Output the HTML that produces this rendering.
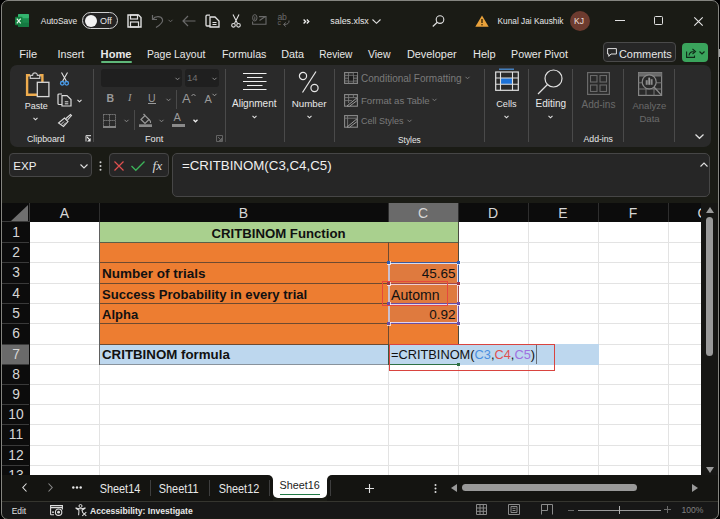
<!DOCTYPE html>
<html><head><meta charset="utf-8">
<style>
*{margin:0;padding:0;box-sizing:border-box}
html,body{width:720px;height:519px;overflow:hidden;background:#000}
body{position:relative;font-family:"Liberation Sans",sans-serif;color:#e8e8e8}
.a{position:absolute;white-space:nowrap}
#win{position:absolute;left:1px;top:0;width:718px;height:520px;background:#1a1b15;border:1px solid #858580;border-radius:7px;overflow:hidden}
.t{position:absolute;white-space:nowrap;line-height:1}
.sep{position:absolute;width:1px;background:#4a4a4a}
svg{position:absolute;overflow:visible}
</style></head><body>
<div id="win"></div>

<!-- ===== TITLE BAR ===== -->
<!-- excel icon -->
<svg style="left:15px;top:14px" width="14" height="13" viewBox="0 0 14 13">
  <rect x="3" y="0" width="11" height="13" rx="1" fill="#1a8a4c"/>
  <rect x="3" y="0" width="11" height="4.3" rx="1" fill="#33b36e"/>
  <rect x="3" y="8.7" width="11" height="4.3" rx="1" fill="#157a42"/>
  <rect x="0" y="2.8" width="7.5" height="8.4" rx="1" fill="#13803f"/>
  <path d="M1.8 4.6 L5.7 9.4 M5.7 4.6 L1.8 9.4" stroke="#e8f5ec" stroke-width="1.2"/>
</svg>
<div class="t" style="left:40.8px;top:16.8px;font-size:8.4px;color:#e8e8e8">AutoSave</div>
<div class="a" style="left:82px;top:12px;width:36px;height:17px;border:1.3px solid #cfcfcf;border-radius:9px;background:#232323"></div>
<div class="a" style="left:84.5px;top:14.5px;width:12px;height:12px;border-radius:50%;background:#f2f2f2"></div>
<div class="t" style="left:100px;top:16.5px;font-size:9px;color:#e8e8e8">Off</div>
<!-- save -->
<svg style="left:127px;top:14px" width="15" height="14" viewBox="0 0 15 14">
  <path d="M1 1 H11.5 L14 3.5 V13 H1 Z" fill="none" stroke="#e0e0e0" stroke-width="1.4"/>
  <rect x="3.5" y="1" width="7" height="4" fill="none" stroke="#e0e0e0" stroke-width="1.2"/>
  <rect x="3.5" y="8" width="8" height="5" fill="none" stroke="#e0e0e0" stroke-width="1.2"/>
</svg>
<!-- undo (disabled) -->
<svg style="left:151px;top:14px" width="13" height="14" viewBox="0 0 13 14">
  <path d="M1.5 1 V5.5 H6" fill="none" stroke="#6a6a6a" stroke-width="1.2"/>
  <path d="M1.8 5.3 C4 2 10 1.5 11.5 5.5 C12.5 8.5 9 11 5 13.5" fill="none" stroke="#6a6a6a" stroke-width="1.2"/>
</svg>
<svg style="left:168px;top:19px" width="5" height="4" viewBox="0 0 5 4"><path d="M0.5 0.8 L2.5 2.8 L4.5 0.8" fill="none" stroke="#6a6a6a" stroke-width="1"/></svg>
<!-- back arrow disabled -->
<svg style="left:182px;top:15px" width="14" height="12" viewBox="0 0 14 12">
  <path d="M13.5 6 H1 M6 1 L1 6 L6 11" fill="none" stroke="#6a6a6a" stroke-width="1.2"/>
</svg>
<!-- copy -->
<svg style="left:205px;top:14px" width="15" height="14" viewBox="0 0 15 14">
  <path d="M5 1.2 H2 Q1 1.2 1 2.2 V11 Q1 12 2 12 H5" fill="none" stroke="#e0e0e0" stroke-width="1.3"/>
  <path d="M5 3 H10 L14 7 V13 H5 Z" fill="none" stroke="#e0e0e0" stroke-width="1.3"/>
  <path d="M7.5 8.5 H11.5 M7.5 10.5 H11.5" stroke="#e0e0e0" stroke-width="1"/>
</svg>
<!-- scissors -->
<svg style="left:231px;top:14px" width="10" height="14" viewBox="0 0 10 14">
  <path d="M2 0.5 L6.5 9.5 M8 0.5 L3.5 9.5" stroke="#e0e0e0" stroke-width="1.1" fill="none"/>
  <circle cx="2.5" cy="11.3" r="1.8" fill="none" stroke="#e0e0e0" stroke-width="1.1"/>
  <circle cx="7.5" cy="11.3" r="1.8" fill="none" stroke="#e0e0e0" stroke-width="1.1"/>
</svg>
<!-- mail attach disabled -->
<svg style="left:252px;top:14px" width="15" height="11" viewBox="0 0 15 11">
  <path d="M7 2.6 H14 V10.2 H0.6 V7.5" fill="none" stroke="#6a6a6a" stroke-width="1.1"/>
  <path d="M7.5 6.5 L13 2.8" stroke="#6a6a6a" stroke-width="1.1"/>
  <ellipse cx="2.8" cy="3.8" rx="2.2" ry="3.2" fill="none" stroke="#6a6a6a" stroke-width="1"/>
  <path d="M2.8 2.5 V6" stroke="#6a6a6a" stroke-width="0.9"/>
</svg>
<!-- spelling disabled -->
<div class="t" style="left:277.5px;top:13.3px;font-size:8.6px;color:#6a6a6a;letter-spacing:-0.2px">ab</div>
<div class="t" style="left:277.5px;top:19.2px;font-size:7px;color:#6a6a6a">c</div>
<svg style="left:282px;top:20px" width="8" height="7" viewBox="0 0 8 7">
  <path d="M7 0.5 Q7.5 4.5 2 4.5 M3.8 2.5 L1.5 4.5 L3.8 6.5" fill="none" stroke="#6a6a6a" stroke-width="1"/>
</svg>
<svg style="left:302.5px;top:18.7px" width="7" height="5" viewBox="0 0 7 5"><path d="M0.6 0.5 L2.6 2.5 L0.6 4.5 M3.8 0.5 L5.8 2.5 L3.8 4.5" fill="none" stroke="#f0f0f0" stroke-width="1.3"/></svg>
<div class="t" style="left:330.3px;top:17px;font-size:8.9px;color:#e8e8e8">sales.xlsx</div>
<svg style="left:372px;top:19px" width="9" height="5" viewBox="0 0 9 5"><path d="M0.5 0.5 L4.5 4.3 L8.5 0.5" fill="none" stroke="#e0e0e0" stroke-width="1.1"/></svg>
<!-- search -->
<svg style="left:432px;top:15px" width="13" height="12" viewBox="0 0 13 12">
  <circle cx="8" cy="4.6" r="3.8" fill="none" stroke="#e0e0e0" stroke-width="1.1"/>
  <path d="M5.3 7.3 L0.8 11.5" stroke="#e0e0e0" stroke-width="1.2"/>
</svg>
<!-- warning -->
<svg style="left:475px;top:15px" width="14" height="12" viewBox="0 0 14 12">
  <path d="M7 0.5 L13.7 11.7 H0.3 Z" fill="#e9a23b"/>
  <path d="M7 4 V8" stroke="#2a1c00" stroke-width="1.3"/>
  <circle cx="7" cy="9.8" r="0.75" fill="#2a1c00"/>
</svg>
<div class="t" style="left:497.5px;top:16.8px;font-size:8.3px;color:#e8e8e8">Kunal Jai Kaushik</div>
<div class="a" style="left:570px;top:11px;width:20px;height:20px;border-radius:50%;background:#6d3b2f"></div>
<div class="t" style="left:574px;top:17px;font-size:8.5px;color:#f0e0dc">KJ</div>
<div class="a" style="left:615px;top:20px;width:10px;height:1.2px;background:#e0e0e0"></div>
<div class="a" style="left:654px;top:16px;width:9px;height:9px;border:1.2px solid #e0e0e0;border-radius:1.5px"></div>
<svg style="left:694px;top:16.5px" width="9" height="9" viewBox="0 0 9 9"><path d="M0.3 0.3 L8.7 8.7 M8.7 0.3 L0.3 8.7" stroke="#e8e8e8" stroke-width="1.1"/></svg>

<!-- ===== TABS ===== -->
<div class="t" style="left:19.3px;top:48.6px;font-size:11.1px">File</div>
<div class="t" style="left:57.6px;top:48.9px;font-size:10.69px">Insert</div>
<div class="t" style="left:100.6px;top:48.6px;font-size:11.14px;font-weight:bold">Home</div>
<div class="a" style="left:101px;top:61px;width:31px;height:2px;background:#5fb87a;border-radius:1px"></div>
<div class="t" style="left:146.9px;top:49.7px;font-size:10.42px">Page Layout</div>
<div class="t" style="left:221.9px;top:48.9px;font-size:10.7px">Formulas</div>
<div class="t" style="left:281.3px;top:48.9px;font-size:10.8px">Data</div>
<div class="t" style="left:319.3px;top:49.5px;font-size:10.07px">Review</div>
<div class="t" style="left:368.0px;top:49.7px;font-size:10.48px">View</div>
<div class="t" style="left:406.9px;top:48.8px;font-size:10.91px">Developer</div>
<div class="t" style="left:473.0px;top:48.7px;font-size:11.03px">Help</div>
<div class="t" style="left:511.1px;top:49.0px;font-size:10.67px">Power Pivot</div>
<div class="a" style="left:603px;top:42px;width:73px;height:20px;border:1px solid #4a4a4a;border-radius:4px;background:#262626"></div>
<svg style="left:607px;top:48px" width="10" height="9" viewBox="0 0 10 9"><path d="M0.6 0.6 H9.4 V6 H4 L1.8 8.4 V6 H0.6 Z" fill="none" stroke="#e0e0e0" stroke-width="1"/></svg>
<div class="t" style="left:618.9px;top:48.7px;font-size:10.96px">Comments</div>
<div class="a" style="left:682px;top:43px;width:26px;height:19px;border-radius:4px;background:#3aa45c"></div>
<svg style="left:686px;top:47.5px" width="11" height="10" viewBox="0 0 11 10"><path d="M0.6 3.5 V9.4 H8.5 V7.5" fill="none" stroke="#102a18" stroke-width="1.1"/><path d="M3 7.5 Q3.5 3.5 8 3.5 M6.5 1 L9.5 3.5 L6.5 6" fill="none" stroke="#102a18" stroke-width="1.1"/></svg>
<svg style="left:699px;top:51px" width="6" height="4" viewBox="0 0 6 4"><path d="M0.5 0.5 L3 3 L5.5 0.5" fill="none" stroke="#102a18" stroke-width="1.2"/></svg>

<!-- ===== RIBBON ===== -->
<div class="a" style="left:9.5px;top:65px;width:701px;height:82px;background:#2a2a2a;border-radius:7px"></div>
<!-- clipboard -->
<svg style="left:25px;top:71px" width="26" height="27" viewBox="0 0 26 27">
  <path d="M5 4.2 H2.1 V23.8 H12" fill="none" stroke="#eeac4e" stroke-width="2.4"/>
  <path d="M14.5 4.2 H17.4 V11" fill="none" stroke="#eeac4e" stroke-width="2.4"/>
  <path d="M5.3 7.3 V4.3 H7.6 A2.4 2.4 0 0 1 12.4 4.3 H14.7 V7.3 Z" fill="#2a2a2a" stroke="#c4c4c4" stroke-width="1.2"/>
  <rect x="12.3" y="11.3" width="11.6" height="14.3" fill="#2a2a2a" stroke="#d8d8d8" stroke-width="1.3"/>
</svg>
<div class="t" style="left:24.7px;top:102.2px;font-size:9px">Paste</div>
<svg style="left:33px;top:117px" width="5" height="4" viewBox="0 0 5 4"><path d="M0.5 0.8 L2.5 2.8 L4.5 0.8" fill="none" stroke="#e0e0e0" stroke-width="1.1"/></svg>
<svg style="left:60px;top:72px" width="9" height="14" viewBox="0 0 9 14">
  <path d="M1.5 0.5 L6.3 9 M7.5 0.5 L2.7 9" stroke="#e0e0e0" stroke-width="1.1" fill="none"/>
  <circle cx="2.3" cy="11.3" r="1.8" fill="none" stroke="#4a9be8" stroke-width="1.3"/>
  <circle cx="6.7" cy="11.3" r="1.8" fill="none" stroke="#4a9be8" stroke-width="1.3"/>
</svg>
<svg style="left:56.5px;top:93px" width="15" height="14" viewBox="0 0 15 14">
  <path d="M5 1 H2 Q1 1 1 2 V10.5 Q1 11.5 2 11.5 H5" fill="none" stroke="#dcdcdc" stroke-width="1.2"/>
  <path d="M5 2.6 H10 L14 6.6 V13 H5 Z" fill="none" stroke="#dcdcdc" stroke-width="1.2"/>
  <path d="M7.8 8.8 H11.3 M7.8 10.8 H11.3" stroke="#dcdcdc" stroke-width="1"/>
</svg>
<svg style="left:77px;top:98.5px" width="5" height="4" viewBox="0 0 5 4"><path d="M0.5 0.8 L2.5 2.8 L4.5 0.8" fill="none" stroke="#e0e0e0" stroke-width="1.1"/></svg>
<svg style="left:57.5px;top:113.5px" width="14" height="13" viewBox="0 0 14 13">
  <path d="M8 4.5 L12.5 0.5 L13.5 1.5 L9.5 6" fill="none" stroke="#dcdcdc" stroke-width="1.1"/>
  <path d="M6.5 4 L10 7.5 L5.5 12.5 L0.5 9 Z" fill="none" stroke="#dcdcdc" stroke-width="1.1"/>
  <path d="M3 10.5 L6 7.5 M5 11.5 L8 8.5" stroke="#dcdcdc" stroke-width="0.9"/>
</svg>
<div class="t" style="left:27px;top:135.2px;font-size:8.8px">Clipboard</div>
<svg style="left:85.5px;top:135px" width="5" height="7" viewBox="0 0 5 7"><path d="M0 0.6 H5 M0 0.6 V6.5" stroke="#c8c8c8" stroke-width="1.1"/><path d="M1 2 L3.8 4.8" stroke="#f0f0f0" stroke-width="1.1"/><path d="M4.6 3 V6.6 H1 Z" fill="#f0f0f0"/></svg>
<div class="sep" style="left:93px;top:69px;height:73px"></div>
<!-- font -->
<div class="a" style="left:101px;top:69px;width:81px;height:18px;background:#1f1f1f;border-radius:3px"></div>
<svg style="left:174.5px;top:76.5px" width="5" height="4" viewBox="0 0 5 4"><path d="M0.5 0.8 L2.5 2.8 L4.5 0.8" fill="none" stroke="#8a8a8a" stroke-width="1"/></svg>
<div class="a" style="left:185px;top:69px;width:33.5px;height:18px;background:#1f1f1f;border-radius:3px"></div>
<div class="t" style="left:187px;top:73px;font-size:9.5px;color:#6f6f6f">14</div>
<svg style="left:211.5px;top:76.5px" width="5" height="4" viewBox="0 0 5 4"><path d="M0.5 0.8 L2.5 2.8 L4.5 0.8" fill="none" stroke="#8a8a8a" stroke-width="1"/></svg>
<div class="t" style="left:106.5px;top:93px;font-size:10.5px;font-weight:bold;color:#9a9a9a">B</div>
<div class="t" style="left:128px;top:93px;font-size:10.5px;font-style:italic;font-family:'Liberation Serif',serif;color:#9a9a9a">I</div>
<div class="t" style="left:148px;top:93px;font-size:10.5px;color:#9a9a9a">U</div>
<div class="a" style="left:148px;top:103px;width:7.5px;height:1.2px;background:#9a9a9a"></div>
<svg style="left:166px;top:97.5px" width="5" height="4" viewBox="0 0 5 4"><path d="M0.5 0.8 L2.5 2.8 L4.5 0.8" fill="none" stroke="#8a8a8a" stroke-width="1"/></svg>
<div class="sep" style="left:176px;top:90px;height:19px"></div>
<div class="t" style="left:182px;top:92px;font-size:13px;color:#9a9a9a">A</div>
<svg style="left:191px;top:93px" width="5" height="4" viewBox="0 0 5 4"><path d="M0.5 3 L2.5 1 L4.5 3" fill="none" stroke="#9a9a9a" stroke-width="1"/></svg>
<div class="t" style="left:204.5px;top:94px;font-size:11px;color:#9a9a9a">A</div>
<svg style="left:211.5px;top:93px" width="5" height="4" viewBox="0 0 5 4"><path d="M0.5 0.8 L2.5 2.8 L4.5 0.8" fill="none" stroke="#9a9a9a" stroke-width="1"/></svg>
<svg style="left:103px;top:113.5px" width="13" height="14" viewBox="0 0 13 14">
  <path d="M0.5 0.5 H12.5 V12 M0.5 0.5 V12 M6.5 0.5 V12 M0.5 6.5 H12.5" fill="none" stroke="#8a8a8a" stroke-width="1" stroke-dasharray="1.2 0.8"/>
  <path d="M0 13 H13" stroke="#9a9a9a" stroke-width="1.6"/>
</svg>
<svg style="left:123.5px;top:118.5px" width="5" height="4" viewBox="0 0 5 4"><path d="M0.5 0.8 L2.5 2.8 L4.5 0.8" fill="none" stroke="#8a8a8a" stroke-width="1"/></svg>
<div class="sep" style="left:134px;top:110px;height:20px"></div>
<svg style="left:139px;top:113px" width="13" height="14" viewBox="0 0 13 14">
  <path d="M2 6.5 L6 2.5 L10 6.5 L6 10.5 Z" fill="none" stroke="#9a9a9a" stroke-width="1.2"/>
  <path d="M4.5 1 L6 2.5" stroke="#9a9a9a" stroke-width="1.2"/>
  <path d="M10 6.5 Q12 8 11.5 10" fill="none" stroke="#9a9a9a" stroke-width="1.2"/>
  <rect x="0" y="11.3" width="13" height="2.7" fill="#8a8a8a"/>
</svg>
<svg style="left:158.5px;top:118.5px" width="5" height="4" viewBox="0 0 5 4"><path d="M0.5 0.8 L2.5 2.8 L4.5 0.8" fill="none" stroke="#8a8a8a" stroke-width="1"/></svg>
<div class="t" style="left:173.5px;top:112px;font-size:11px;color:#9a9a9a">A</div>
<div class="a" style="left:172px;top:124.3px;width:13.3px;height:2.7px;background:#8a8a8a"></div>
<svg style="left:192.5px;top:118.5px" width="5" height="4" viewBox="0 0 5 4"><path d="M0.5 0.8 L2.5 2.8 L4.5 0.8" fill="none" stroke="#f0f0f0" stroke-width="1.3"/></svg>
<div class="t" style="left:145px;top:134.9px;font-size:9.2px">Font</div>
<svg style="left:216px;top:134.5px" width="7" height="7" viewBox="0 0 7 7"><path d="M0.5 6.5 V0.5 H6.5 V6.5 Z M2 2 L5.5 5.5 M5.5 3 V5.5 H3" fill="none" stroke="#6a6a6a" stroke-width="0.9"/></svg>
<div class="sep" style="left:225px;top:69px;height:73px"></div>
<!-- alignment -->
<svg style="left:243px;top:72px" width="24" height="18" viewBox="0 0 24 18">
  <path d="M0 1.5 H23.5 M4 5.5 H19.5 M0 9.5 H23.5 M4 13.5 H19.5 M0 17.5 H23.5" stroke="#f0f0f0" stroke-width="1"/>
</svg>
<div class="t" style="left:232px;top:98.8px;font-size:10px">Alignment</div>
<svg style="left:252px;top:115px" width="5" height="4" viewBox="0 0 5 4"><path d="M0.5 0.8 L2.5 2.8 L4.5 0.8" fill="none" stroke="#e0e0e0" stroke-width="1.1"/></svg>
<div class="sep" style="left:284px;top:69px;height:73px"></div>
<svg style="left:298px;top:71px" width="22" height="22" viewBox="0 0 22 22">
  <circle cx="5" cy="5" r="3.6" fill="none" stroke="#e8e8e8" stroke-width="1.2"/>
  <circle cx="16.5" cy="17" r="3.6" fill="none" stroke="#e8e8e8" stroke-width="1.2"/>
  <path d="M18 0.5 L4.5 21.5" stroke="#e8e8e8" stroke-width="1.2"/>
</svg>
<div class="t" style="left:291.7px;top:99.0px;font-size:9.8px">Number</div>
<svg style="left:307px;top:115px" width="5" height="4" viewBox="0 0 5 4"><path d="M0.5 0.8 L2.5 2.8 L4.5 0.8" fill="none" stroke="#e0e0e0" stroke-width="1.1"/></svg>
<div class="sep" style="left:334px;top:69px;height:73px"></div>
<!-- styles -->
<svg style="left:344px;top:72px" width="14" height="12" viewBox="0 0 14 12">
  <rect x="0.6" y="0.6" width="12.8" height="10.8" fill="none" stroke="#8a8a8a" stroke-width="1.1"/>
  <path d="M4.6 0.6 V11.4 M9.4 0.6 V11.4 M0.6 3.4 H13.4 M0.6 6.2 H13.4 M0.6 9 H13.4" stroke="#7a7a7a" stroke-width="0.9"/>
  <rect x="5" y="3.8" width="4" height="4.8" fill="#1e1e1e"/>
  <rect x="9.8" y="0.9" width="3.4" height="2.3" fill="#1e1e1e"/>
</svg>
<div class="t" style="left:361px;top:73.9px;font-size:10px;color:#7a7a7a">Conditional Formatting</div>
<svg style="left:465px;top:76px" width="5" height="4" viewBox="0 0 5 4"><path d="M0.5 0.8 L2.5 2.8 L4.5 0.8" fill="none" stroke="#7a7a7a" stroke-width="1"/></svg>
<svg style="left:344px;top:93.5px" width="14" height="13" viewBox="0 0 14 13">
  <rect x="0.6" y="0.6" width="12.8" height="11.6" fill="none" stroke="#8a8a8a" stroke-width="1.1"/>
  <path d="M0.6 3.6 H13.4 M0.6 6.6 H8 M4.6 0.6 V9 M9.4 0.6 V3.6" stroke="#7a7a7a" stroke-width="0.9"/>
  <path d="M3 12 L12.5 4.2 L13.4 6.3 L5.5 12.2 Z" fill="#2a2a2a" stroke="#9a9a9a" stroke-width="1"/>
</svg>
<div class="t" style="left:361px;top:95.5px;font-size:9.6px;color:#7a7a7a">Format as Table</div>
<svg style="left:432px;top:97.5px" width="5" height="4" viewBox="0 0 5 4"><path d="M0.5 0.8 L2.5 2.8 L4.5 0.8" fill="none" stroke="#7a7a7a" stroke-width="1"/></svg>
<svg style="left:344px;top:115px" width="14" height="13" viewBox="0 0 14 13">
  <rect x="0.6" y="0.6" width="12.8" height="11.6" fill="none" stroke="#8a8a8a" stroke-width="1.1"/>
  <path d="M0.6 3.2 H13.4 M3.6 0.6 V12.2" stroke="#7a7a7a" stroke-width="0.9"/>
  <path d="M3 12 L12.5 4.2 L13.4 6.3 L5.5 12.2 Z" fill="#2a2a2a" stroke="#9a9a9a" stroke-width="1"/>
</svg>
<div class="t" style="left:361px;top:117.4px;font-size:9px;color:#7a7a7a">Cell Styles</div>
<svg style="left:407px;top:119px" width="5" height="4" viewBox="0 0 5 4"><path d="M0.5 0.8 L2.5 2.8 L4.5 0.8" fill="none" stroke="#7a7a7a" stroke-width="1"/></svg>
<div class="t" style="left:398px;top:135.6px;font-size:8.4px">Styles</div>
<div class="sep" style="left:484px;top:69px;height:73px"></div>
<!-- cells -->
<svg style="left:495px;top:68px" width="24" height="23" viewBox="0 0 24 23">
  <path d="M4 1.2 H19" stroke="#4a90d9" stroke-width="1.3"/>
  <rect x="0.7" y="4" width="22.6" height="18.3" fill="none" stroke="#e0e0e0" stroke-width="1.2"/>
  <rect x="5.5" y="10" width="12" height="6.3" fill="#1d72d8"/>
  <path d="M5.5 4 V22.3 M17.5 4 V22.3 M0.7 10 H23.3 M0.7 16.3 H23.3" stroke="#e0e0e0" stroke-width="1.1"/>
</svg>
<div class="t" style="left:496.3px;top:99.6px;font-size:9.1px">Cells</div>
<svg style="left:503.5px;top:115px" width="5" height="4" viewBox="0 0 5 4"><path d="M0.5 0.8 L2.5 2.8 L4.5 0.8" fill="none" stroke="#e0e0e0" stroke-width="1.1"/></svg>
<div class="sep" style="left:528px;top:69px;height:73px"></div>
<svg style="left:537px;top:69px" width="27" height="26" viewBox="0 0 27 26">
  <circle cx="16.5" cy="9.5" r="8.5" fill="none" stroke="#e0e0e0" stroke-width="1.2"/>
  <path d="M10.5 15.5 L1 25" stroke="#e0e0e0" stroke-width="1.2"/>
</svg>
<div class="t" style="left:535.5px;top:98.8px;font-size:10px">Editing</div>
<svg style="left:548px;top:115px" width="5" height="4" viewBox="0 0 5 4"><path d="M0.5 0.8 L2.5 2.8 L4.5 0.8" fill="none" stroke="#e0e0e0" stroke-width="1.1"/></svg>
<div class="sep" style="left:572px;top:69px;height:73px"></div>
<!-- add-ins -->
<svg style="left:587px;top:72px" width="23" height="23" viewBox="0 0 23 23">
  <rect x="0.6" y="0.6" width="21.8" height="21.8" fill="none" stroke="#6a6a6a" stroke-width="1.2"/>
  <rect x="3.5" y="3.5" width="6.5" height="6.5" fill="none" stroke="#6a6a6a" stroke-width="1.1"/>
  <rect x="13" y="3.5" width="6.5" height="6.5" fill="none" stroke="#6a6a6a" stroke-width="1.1"/>
  <rect x="3.5" y="13" width="6.5" height="6.5" fill="none" stroke="#6a6a6a" stroke-width="1.1"/>
  <rect x="13" y="13" width="6.5" height="6.5" fill="none" stroke="#6a6a6a" stroke-width="1.1"/>
</svg>
<div class="t" style="left:581.5px;top:100.4px;font-size:10px;color:#6a6a6a">Add-ins</div>
<div class="t" style="left:583.5px;top:135.3px;font-size:8.7px">Add-ins</div>
<div class="sep" style="left:623px;top:69px;height:73px"></div>
<svg style="left:637.5px;top:71.5px" width="25" height="25" viewBox="0 0 25 25">
  <rect x="0.6" y="0.6" width="23" height="22.8" fill="none" stroke="#858585" stroke-width="1.2"/>
  <rect x="0.6" y="0.6" width="23" height="3.4" fill="#6a6a6a"/>
  <path d="M0.6 4 H23.6 M0.6 10.8 H23.6 M0.6 17 H23.6 M8 4 V23.4 M16 4 V23.4" stroke="#777" stroke-width="1"/>
  <circle cx="11.2" cy="9.9" r="7" fill="#2a2a2a" stroke="#8a8a8a" stroke-width="1.2"/>
  <rect x="7.7" y="8.2" width="2" height="4.6" fill="#8a8a8a"/>
  <rect x="10.3" y="5.6" width="1.8" height="7.2" fill="#9a9a9a"/>
  <rect x="12.6" y="7.2" width="2" height="5.6" fill="#8a8a8a"/>
  <path d="M16 15 L23.6 23.4" stroke="#8a8a8a" stroke-width="1.3"/>
</svg>
<div class="t" style="left:632.5px;top:101.0px;font-size:9.5px;color:#6a6a6a">Analyze</div>
<div class="t" style="left:639.4px;top:114.3px;font-size:9.6px;color:#6a6a6a">Data</div>
<div class="sep" style="left:674px;top:69px;height:73px"></div>
<svg style="left:695px;top:133.5px" width="9" height="5" viewBox="0 0 9 5"><path d="M0.5 0.5 L4.5 4.3 L8.5 0.5" fill="none" stroke="#e0e0e0" stroke-width="1.2"/></svg>

<!-- ===== FORMULA BAR ===== -->
<div class="a" style="left:8.5px;top:153px;width:83.5px;height:24px;border:1px solid #464646;border-radius:4px;background:#262626"></div>
<div class="t" style="left:13.3px;top:159.9px;font-size:11.6px;color:#f0f0f0">EXP</div>
<div class="a" style="left:108.5px;top:153px;width:60px;height:24px;border:1px solid #464646;border-radius:4px;background:#262626"></div>
<div class="a" style="left:172px;top:153px;width:538px;height:44px;border:1px solid #464646;border-radius:5px;background:#262626"></div>
<div class="t" style="left:182px;top:159.3px;font-size:13.3px;color:#f0f0f0">=CRITBINOM(C3,C4,C5)</div>
<svg style="left:79.5px;top:163.5px" width="8" height="5" viewBox="0 0 8 5"><path d="M0.5 0.5 L4 4 L7.5 0.5" fill="none" stroke="#e0e0e0" stroke-width="1.1"/></svg>
<svg style="left:99px;top:161px" width="3" height="10" viewBox="0 0 3 10"><circle cx="1.5" cy="1.2" r="1" fill="#d0d0d0"/><circle cx="1.5" cy="5" r="1" fill="#d0d0d0"/><circle cx="1.5" cy="8.8" r="1" fill="#d0d0d0"/></svg>
<svg style="left:114px;top:160.5px" width="10" height="10" viewBox="0 0 10 10"><path d="M0.5 0.5 L9.5 9.5 M9.5 0.5 L0.5 9.5" stroke="#e0504f" stroke-width="1.2"/></svg>
<svg style="left:131px;top:160.5px" width="14" height="10" viewBox="0 0 14 10"><path d="M0.5 5 L4.8 9.3 L13.5 0.5" fill="none" stroke="#3cb45a" stroke-width="1.3"/></svg>
<div class="t" style="left:152.5px;top:158.5px;font-size:13.5px;font-style:italic;font-family:'Liberation Serif',serif;color:#d8d8d8">fx</div>
<svg style="left:699.5px;top:161.5px" width="8" height="5" viewBox="0 0 8 5"><path d="M0.5 4.5 L4 1 L7.5 4.5" fill="none" stroke="#e0e0e0" stroke-width="1.1"/></svg>

<!-- ===== GRID ===== -->
<div class="a" style="left:2px;top:203px;width:699px;height:19px;background:#0c0c0c"></div>
<div class="a" style="left:2px;top:222px;width:28px;height:253px;background:#0c0c0c"></div>
<svg style="left:11px;top:205px" width="17" height="16" viewBox="0 0 17 16"><path d="M17 0 V16 H0 Z" fill="#6f6f6f"/></svg>
<div class="a" style="left:2px;top:221px;width:28px;height:1px;background:#3a3a3a"></div>
<div class="a" style="left:29px;top:203px;width:1px;height:19px;background:#3a3a3a"></div>
<div class="a" style="left:99px;top:203px;width:1px;height:19px;background:#2e2e2e"></div>
<div class="a" style="left:388px;top:203px;width:1px;height:19px;background:#2e2e2e"></div>
<div class="a" style="left:458px;top:203px;width:1px;height:19px;background:#2e2e2e"></div>
<div class="a" style="left:528px;top:203px;width:1px;height:19px;background:#2e2e2e"></div>
<div class="a" style="left:598px;top:203px;width:1px;height:19px;background:#2e2e2e"></div>
<div class="a" style="left:668px;top:203px;width:1px;height:19px;background:#2e2e2e"></div>
<div class="a" style="left:389px;top:203px;width:69px;height:19px;background:#6a6a6a"></div>
<div class="a" style="left:0;top:203px;width:701px;height:19px;overflow:hidden">
<div class="t" style="left:30px;width:69px;top:2.5px;font-size:14px;text-align:center;color:#d6d6d6">A</div>
<div class="t" style="left:99px;width:289px;top:2.5px;font-size:14px;text-align:center;color:#d6d6d6">B</div>
<div class="t" style="left:388px;width:70px;top:2.5px;font-size:14px;text-align:center;color:#d6d6d6">C</div>
<div class="t" style="left:458px;width:70px;top:2.5px;font-size:14px;text-align:center;color:#d6d6d6">D</div>
<div class="t" style="left:528px;width:70px;top:2.5px;font-size:14px;text-align:center;color:#d6d6d6">E</div>
<div class="t" style="left:598px;width:70px;top:2.5px;font-size:14px;text-align:center;color:#d6d6d6">F</div>
<div class="t" style="left:668px;width:70px;top:2.5px;font-size:14px;text-align:center;color:#d6d6d6">G</div>
</div>
<div class="a" style="left:30px;top:222px;width:671px;height:253px;background:#fff;overflow:hidden">
<div class="a" style="left:0.00px;top:20.00px;width:671.00px;height:1.00px;background:#e3e3e3;"></div>
<div class="a" style="left:0.00px;top:40.00px;width:671.00px;height:1.00px;background:#e3e3e3;"></div>
<div class="a" style="left:0.00px;top:61.00px;width:671.00px;height:1.00px;background:#e3e3e3;"></div>
<div class="a" style="left:0.00px;top:81.00px;width:671.00px;height:1.00px;background:#e3e3e3;"></div>
<div class="a" style="left:0.00px;top:101.00px;width:671.00px;height:1.00px;background:#e3e3e3;"></div>
<div class="a" style="left:0.00px;top:122.00px;width:671.00px;height:1.00px;background:#e3e3e3;"></div>
<div class="a" style="left:0.00px;top:142.00px;width:671.00px;height:1.00px;background:#e3e3e3;"></div>
<div class="a" style="left:0.00px;top:162.00px;width:671.00px;height:1.00px;background:#e3e3e3;"></div>
<div class="a" style="left:0.00px;top:182.00px;width:671.00px;height:1.00px;background:#e3e3e3;"></div>
<div class="a" style="left:0.00px;top:202.00px;width:671.00px;height:1.00px;background:#e3e3e3;"></div>
<div class="a" style="left:0.00px;top:223.00px;width:671.00px;height:1.00px;background:#e3e3e3;"></div>
<div class="a" style="left:0.00px;top:243.00px;width:671.00px;height:1.00px;background:#e3e3e3;"></div>
<div class="a" style="left:0.00px;top:263.00px;width:671.00px;height:1.00px;background:#e3e3e3;"></div>
<div class="a" style="left:69.00px;top:0.00px;width:1.00px;height:253.00px;background:#e3e3e3;"></div>
<div class="a" style="left:358.00px;top:0.00px;width:1.00px;height:253.00px;background:#e3e3e3;"></div>
<div class="a" style="left:428.00px;top:0.00px;width:1.00px;height:253.00px;background:#e3e3e3;"></div>
<div class="a" style="left:498.00px;top:0.00px;width:1.00px;height:253.00px;background:#e3e3e3;"></div>
<div class="a" style="left:568.00px;top:0.00px;width:1.00px;height:253.00px;background:#e3e3e3;"></div>
<div class="a" style="left:638.00px;top:0.00px;width:1.00px;height:253.00px;background:#e3e3e3;"></div>
<div class="a" style="left:69.00px;top:0.00px;width:360.00px;height:21.00px;background:#a9d08e;"></div>
<div class="a" style="left:69.00px;top:20.00px;width:360.00px;height:103.00px;background:#ed7d31;"></div>
<div class="a" style="left:69.00px;top:122.00px;width:500.00px;height:21.00px;background:#bdd7ee;"></div>
<div class="a" style="left:69.00px;top:20.00px;width:360.00px;height:1.00px;background:#5a6048;"></div>
<div class="a" style="left:69.00px;top:40.00px;width:360.00px;height:1.00px;background:#6e4a30;"></div>
<div class="a" style="left:69.00px;top:61.00px;width:360.00px;height:1.00px;background:#6e4a30;"></div>
<div class="a" style="left:69.00px;top:81.00px;width:360.00px;height:1.00px;background:#6e4a30;"></div>
<div class="a" style="left:69.00px;top:101.00px;width:360.00px;height:1.00px;background:#6e4a30;"></div>
<div class="a" style="left:69.00px;top:122.00px;width:360.00px;height:1.00px;background:#6e4a30;"></div>
<div class="a" style="left:69.00px;top:142.00px;width:360.00px;height:1.00px;background:#88929c;"></div>
<div class="a" style="left:69.00px;top:0.00px;width:1.00px;height:143.00px;background:#606060;"></div>
<div class="a" style="left:428.00px;top:0.00px;width:1.00px;height:122.00px;background:#4a4a40;"></div>
<div class="a" style="left:358.00px;top:20.00px;width:1.00px;height:122.00px;background:#6e4a30;"></div>
<div class="a" style="left:359.00px;top:41.00px;width:69.00px;height:60.00px;background:rgba(120,110,160,0.12);"></div>
<div class="a" style="left:358.00px;top:40.00px;width:71.00px;height:1.00px;background:#3a5a9a;"></div>
<div class="a" style="left:359.00px;top:41.00px;width:69.00px;height:1.00px;background:#d8dcf0;"></div>
<div class="a" style="left:428.00px;top:40.00px;width:1.00px;height:22.00px;background:#3a5a9a;"></div>
<div class="a" style="left:427.00px;top:41.00px;width:1.00px;height:20.00px;background:#d8dcf0;"></div>
<div class="a" style="left:358.00px;top:40.00px;width:1.00px;height:22.00px;background:#3a5a9a;"></div>
<div class="a" style="left:359.00px;top:41.00px;width:1.00px;height:20.00px;background:#d8dcf0;"></div>
<div class="a" style="left:358.00px;top:61.00px;width:71.00px;height:1.00px;background:#a04848;"></div>
<div class="a" style="left:359.00px;top:62.00px;width:69.00px;height:1.00px;background:#f0d0d0;"></div>
<div class="a" style="left:428.00px;top:61.00px;width:1.00px;height:21.00px;background:#a04848;"></div>
<div class="a" style="left:427.00px;top:62.00px;width:1.00px;height:19.00px;background:#f0d0d0;"></div>
<div class="a" style="left:358.00px;top:61.00px;width:1.00px;height:21.00px;background:#a04848;"></div>
<div class="a" style="left:359.00px;top:62.00px;width:1.00px;height:19.00px;background:#f0d0d0;"></div>
<div class="a" style="left:358.00px;top:81.00px;width:71.00px;height:1.00px;background:#6a4ea0;"></div>
<div class="a" style="left:359.00px;top:82.00px;width:69.00px;height:1.00px;background:#e0d4f0;"></div>
<div class="a" style="left:428.00px;top:81.00px;width:1.00px;height:21.00px;background:#6a4ea0;"></div>
<div class="a" style="left:427.00px;top:82.00px;width:1.00px;height:19.00px;background:#e0d4f0;"></div>
<div class="a" style="left:358.00px;top:81.00px;width:1.00px;height:21.00px;background:#6a4ea0;"></div>
<div class="a" style="left:359.00px;top:82.00px;width:1.00px;height:19.00px;background:#e0d4f0;"></div>
<div class="a" style="left:358.00px;top:101.00px;width:71.00px;height:1.00px;background:#6a4ea0;"></div>
<div class="a" style="left:359.00px;top:100.00px;width:69.00px;height:1.00px;background:#e0d4f0;"></div>
<div class="a" style="left:358.00px;top:40.00px;width:2.00px;height:62.00px;background:#cbbfcd;"></div>
<div class="a" style="left:356.50px;top:38.50px;width:4.00px;height:4.00px;background:rgba(255,255,255,0.7);"></div>
<div class="a" style="left:357.00px;top:39.00px;width:3.00px;height:3.00px;background:#2f5fb8;"></div>
<div class="a" style="left:426.50px;top:38.50px;width:4.00px;height:4.00px;background:rgba(255,255,255,0.7);"></div>
<div class="a" style="left:427.00px;top:39.00px;width:3.00px;height:3.00px;background:#2f5fb8;"></div>
<div class="a" style="left:356.50px;top:59.50px;width:4.00px;height:4.00px;background:rgba(255,255,255,0.7);"></div>
<div class="a" style="left:357.00px;top:60.00px;width:3.00px;height:3.00px;background:#a03848;"></div>
<div class="a" style="left:426.50px;top:59.50px;width:4.00px;height:4.00px;background:rgba(255,255,255,0.7);"></div>
<div class="a" style="left:427.00px;top:60.00px;width:3.00px;height:3.00px;background:#a03848;"></div>
<div class="a" style="left:356.50px;top:79.50px;width:4.00px;height:4.00px;background:rgba(255,255,255,0.7);"></div>
<div class="a" style="left:357.00px;top:80.00px;width:3.00px;height:3.00px;background:#6a4ea8;"></div>
<div class="a" style="left:426.50px;top:79.50px;width:4.00px;height:4.00px;background:rgba(255,255,255,0.7);"></div>
<div class="a" style="left:427.00px;top:80.00px;width:3.00px;height:3.00px;background:#6a4ea8;"></div>
<div class="a" style="left:356.50px;top:99.50px;width:4.00px;height:4.00px;background:rgba(255,255,255,0.7);"></div>
<div class="a" style="left:357.00px;top:100.00px;width:3.00px;height:3.00px;background:#6a4ea8;"></div>
<div class="a" style="left:426.50px;top:99.50px;width:4.00px;height:4.00px;background:rgba(255,255,255,0.7);"></div>
<div class="a" style="left:427.00px;top:100.00px;width:3.00px;height:3.00px;background:#6a4ea8;"></div>
<div class="a" style="left:358.00px;top:122.00px;width:1.50px;height:21.00px;background:#3a5a40;"></div>
<div class="a" style="left:359.00px;top:142.00px;width:69.00px;height:1.00px;background:#2e7045;"></div>
<div class="a" style="left:427.00px;top:141.00px;width:3.00px;height:3.00px;background:#2e7045;"></div>
<div class="t" style="left:69px;width:359px;top:4.6px;font-size:13.2px;font-weight:bold;color:#111;text-align:center">CRITBINOM Function</div>
<div class="t" style="left:72.0px;top:44.5px;font-size:13.5px;font-weight:bold;color:#111;">Number of trials</div>
<div class="t" style="left:72.0px;top:65.5px;font-size:13.1px;font-weight:bold;color:#111;">Success Probability in every trial</div>
<div class="t" style="left:72.0px;top:85.5px;font-size:13.0px;font-weight:bold;color:#111;">Alpha</div>
<div class="t" style="left:72.0px;top:126.1px;font-size:13.3px;font-weight:bold;color:#111;">CRITBINOM formula</div>
<div class="t" style="left:358px;width:67.5px;top:44.5px;font-size:13.5px;color:#111;text-align:right">45.65</div>
<div class="t" style="left:361.0px;top:65.5px;font-size:14.1px;font-weight:normal;color:#111;">Automn</div>
<div class="t" style="left:358px;width:67.5px;top:85.5px;font-size:13.5px;color:#111;text-align:right">0.92</div>
<div class="t" style="left:361.0px;top:125.7px;font-size:12.8px;font-weight:normal;color:#111;transform:scaleY(1.05);transform-origin:0 0">=CRITBINOM(<span style="color:#4a8fe0">C3</span>,<span style="color:#e05050">C4</span>,<span style="color:#a070e0">C5</span>)</div>
<div class="a" style="left:506.00px;top:123.00px;width:1.00px;height:19.00px;background:#66707a;"></div>
<div class="a" style="left:352px;top:58.6px;width:65.5px;height:25px;border:1.8px solid #e5483e"></div>
<div class="a" style="left:359.2px;top:122.3px;width:166.3px;height:26.5px;border:1.9px solid #d9443f"></div>
</div>
<div class="t" style="left:2px;width:28px;top:225.7px;font-size:13.8px;text-align:center;color:#d6d6d6">1</div>
<div class="a" style="left:2px;top:242px;width:27px;height:1px;background:#3a3a3a"></div>
<div class="t" style="left:2px;width:28px;top:245.7px;font-size:13.8px;text-align:center;color:#d6d6d6">2</div>
<div class="a" style="left:2px;top:262px;width:27px;height:1px;background:#3a3a3a"></div>
<div class="t" style="left:2px;width:28px;top:265.7px;font-size:13.8px;text-align:center;color:#d6d6d6">3</div>
<div class="a" style="left:2px;top:283px;width:27px;height:1px;background:#3a3a3a"></div>
<div class="t" style="left:2px;width:28px;top:286.7px;font-size:13.8px;text-align:center;color:#d6d6d6">4</div>
<div class="a" style="left:2px;top:303px;width:27px;height:1px;background:#3a3a3a"></div>
<div class="t" style="left:2px;width:28px;top:306.7px;font-size:13.8px;text-align:center;color:#d6d6d6">5</div>
<div class="a" style="left:2px;top:323px;width:27px;height:1px;background:#3a3a3a"></div>
<div class="t" style="left:2px;width:28px;top:326.7px;font-size:13.8px;text-align:center;color:#d6d6d6">6</div>
<div class="a" style="left:2px;top:345px;width:27px;height:19px;background:#6a6a6a"></div>
<div class="a" style="left:2px;top:344px;width:27px;height:1px;background:#3a3a3a"></div>
<div class="t" style="left:2px;width:28px;top:347.7px;font-size:13.8px;text-align:center;color:#d6d6d6">7</div>
<div class="a" style="left:2px;top:364px;width:27px;height:1px;background:#3a3a3a"></div>
<div class="t" style="left:2px;width:28px;top:367.7px;font-size:13.8px;text-align:center;color:#d6d6d6">8</div>
<div class="a" style="left:2px;top:384px;width:27px;height:1px;background:#3a3a3a"></div>
<div class="t" style="left:2px;width:28px;top:387.7px;font-size:13.8px;text-align:center;color:#d6d6d6">9</div>
<div class="a" style="left:2px;top:404px;width:27px;height:1px;background:#3a3a3a"></div>
<div class="t" style="left:2px;width:28px;top:407.7px;font-size:13.8px;text-align:center;color:#d6d6d6">10</div>
<div class="a" style="left:2px;top:424px;width:27px;height:1px;background:#3a3a3a"></div>
<div class="t" style="left:2px;width:28px;top:427.7px;font-size:13.8px;text-align:center;color:#d6d6d6">11</div>
<div class="a" style="left:2px;top:445px;width:27px;height:1px;background:#3a3a3a"></div>
<div class="t" style="left:2px;width:28px;top:448.7px;font-size:13.8px;text-align:center;color:#d6d6d6">12</div>
<div class="a" style="left:2px;top:465px;width:27px;height:1px;background:#3a3a3a"></div>
<div class="t" style="left:2px;width:28px;top:468.7px;font-size:13.8px;text-align:center;color:#d6d6d6">13</div>
<!-- ===== VSCROLL ===== -->
<div class="a" style="left:701px;top:203px;width:17px;height:272px;background:#161614"></div>
<svg style="left:705.5px;top:206.5px" width="8" height="6" viewBox="0 0 8 6"><path d="M4 0 L8 6 H0 Z" fill="#9a9a9a"/></svg>
<div class="a" style="left:706px;top:216.5px;width:7px;height:139px;border-radius:3.5px;background:#9a9a9a"></div>
<svg style="left:705.5px;top:466.5px" width="8" height="6" viewBox="0 0 8 6"><path d="M0 0 H8 L4 6 Z" fill="#9a9a9a"/></svg>
<!-- ===== SHEET TABS ===== -->
<div class="a" style="left:262px;top:475px;width:76px;height:6px;background:#fff"></div>
<div class="a" style="left:2px;top:475px;width:270.5px;height:26px;background:#141411;border-top-right-radius:5px"></div>
<div class="a" style="left:327.3px;top:475px;width:391px;height:26px;background:#141411;border-top-left-radius:5px"></div>
<div class="a" style="left:2px;top:502px;width:716px;height:16px;background:#171717;border-radius:0 0 6px 6px"></div>
<svg style="left:21.5px;top:483px" width="5" height="9" viewBox="0 0 5 9"><path d="M4.5 0.5 L0.8 4.5 L4.5 8.5" fill="none" stroke="#e0e0e0" stroke-width="1.1"/></svg>
<svg style="left:47.5px;top:483px" width="5" height="9" viewBox="0 0 5 9"><path d="M0.5 0.5 L4.2 4.5 L0.5 8.5" fill="none" stroke="#8a8a8a" stroke-width="1.1"/></svg>
<svg style="left:71.5px;top:485.5px" width="10" height="3" viewBox="0 0 10 3"><circle cx="1.3" cy="1.5" r="1.2" fill="#e8e8e8"/><circle cx="5" cy="1.5" r="1.2" fill="#e8e8e8"/><circle cx="8.7" cy="1.5" r="1.2" fill="#e8e8e8"/></svg>
<div class="t" style="left:99.7px;top:482.8px;font-size:10.9px;color:#e8e8e8;transform:scaleY(1.1);transform-origin:0 0">Sheet14</div>
<div class="sep" style="left:150px;top:480px;height:16px;background:#3e3e3e"></div>
<div class="t" style="left:158.8px;top:482.8px;font-size:10.9px;color:#e8e8e8;transform:scaleY(1.1);transform-origin:0 0">Sheet11</div>
<div class="sep" style="left:208.5px;top:480px;height:16px;background:#3e3e3e"></div>
<div class="t" style="left:218.7px;top:482.8px;font-size:10.9px;color:#e8e8e8;transform:scaleY(1.1);transform-origin:0 0">Sheet12</div>
<div class="sep" style="left:269px;top:480px;height:16px;background:#3e3e3e"></div>
<div class="a" style="left:272.5px;top:470px;width:54.8px;height:27.5px;background:#fff;border-radius:0 0 5px 5px"></div>
<div class="t" style="left:279.5px;top:480.4px;font-size:10.8px;color:#222">Sheet16</div>
<div class="a" style="left:279.5px;top:493.5px;width:40px;height:1.6px;background:#1f7a45"></div>
<div class="sep" style="left:329.5px;top:480px;height:16px;background:#3e3e3e"></div>
<svg style="left:364.5px;top:483.5px" width="9" height="9" viewBox="0 0 9 9"><path d="M4.5 0 V9 M0 4.5 H9" stroke="#e0e0e0" stroke-width="1.1"/></svg>
<svg style="left:433.5px;top:484px" width="3" height="9" viewBox="0 0 3 9"><circle cx="1.5" cy="1" r="1" fill="#e0e0e0"/><circle cx="1.5" cy="4.5" r="1" fill="#e0e0e0"/><circle cx="1.5" cy="8" r="1" fill="#e0e0e0"/></svg>
<svg style="left:451px;top:483.5px" width="6" height="8" viewBox="0 0 6 8"><path d="M6 0 V8 L0 4 Z" fill="#9a9a9a"/></svg>
<div class="a" style="left:461.5px;top:483.5px;width:175px;height:7.5px;border-radius:4px;background:#999"></div>
<svg style="left:692px;top:483.5px" width="6" height="8" viewBox="0 0 6 8"><path d="M0 0 V8 L6 4 Z" fill="#9a9a9a"/></svg>
<!-- ===== STATUS BAR ===== -->
<div class="a" style="left:2px;top:501px;width:716px;height:1px;background:#35352f"></div>
<div class="t" style="left:11.7px;top:507px;font-size:8.4px;color:#e0e0e0">Edit</div>
<svg style="left:49.5px;top:505px" width="14" height="11" viewBox="0 0 14 11">
  <path d="M0.6 9.8 V0.6 H12.4 V4.5 M0.6 2.6 H12.4 M0.6 9.8 H4" fill="none" stroke="#dedede" stroke-width="1.1"/>
  <rect x="2.2" y="6.4" width="1.6" height="1.6" fill="#dedede"/>
  <circle cx="8.6" cy="7.2" r="3.2" fill="#1a1a1a" stroke="#dedede" stroke-width="1.1"/>
  <circle cx="8.6" cy="7.2" r="1.4" fill="#dedede"/>
</svg>
<svg style="left:74.5px;top:504px" width="12" height="12" viewBox="0 0 12 12">
  <circle cx="5.5" cy="2" r="1.5" fill="none" stroke="#dedede" stroke-width="1"/>
  <path d="M0.6 4 Q5.5 5.5 10.4 4 L7 6.3 L7.6 8 M4 6.3 L0.6 4 M4 6.3 L3.6 11.2" fill="none" stroke="#dedede" stroke-width="1.05"/>
  <path d="M7.3 8.2 L11.3 11.8 M11.3 8.2 L7.3 11.8" stroke="#dedede" stroke-width="1.05"/>
</svg>
<div class="t" style="left:90px;top:507.1px;font-size:8.6px;font-weight:bold;color:#e8e8e8">Accessibility: Investigate</div>
<svg style="left:476px;top:504px" width="11" height="11" viewBox="0 0 11 11"><path d="M0.5 0.5 H10.5 V10.5 H0.5 Z M0.5 4 H10.5 M0.5 7.3 H10.5 M4 0.5 V10.5 M7.3 0.5 V10.5" fill="none" stroke="#8a8a8a" stroke-width="1"/></svg>
<svg style="left:508px;top:504px" width="12" height="11" viewBox="0 0 12 11"><path d="M0.5 0.5 H11.5 V10.5 H0.5 Z M3 2.5 H9 V8.5 H3 Z M4.5 4.3 H7.5 M4.5 6.5 H7.5" fill="none" stroke="#8a8a8a" stroke-width="1"/></svg>
<svg style="left:541px;top:504px" width="12" height="11" viewBox="0 0 12 11"><path d="M0.5 10.5 V0.5 H11.5 V10.5 M0.5 6.5 H6.5 V0.5" fill="none" stroke="#8a8a8a" stroke-width="1"/></svg>
<div class="a" style="left:568px;top:509.5px;width:6px;height:1px;background:#6a6a6a"></div>
<div class="a" style="left:578px;top:509.5px;width:83px;height:1px;background:#9a9a9a"></div>
<div class="a" style="left:618.5px;top:506px;width:1.2px;height:8px;background:#b0b0b0"></div>
<svg style="left:664px;top:506px" width="7" height="7" viewBox="0 0 7 7"><path d="M3.5 0 V7 M0 3.5 H7" stroke="#6a6a6a" stroke-width="1"/></svg>
<div class="t" style="left:681.5px;top:505.5px;font-size:8.6px;color:#808080">100%</div>
<div class="a" style="left:719px;top:49px;width:1px;height:8px;background:#a0a0a0"></div>
</body></html>
